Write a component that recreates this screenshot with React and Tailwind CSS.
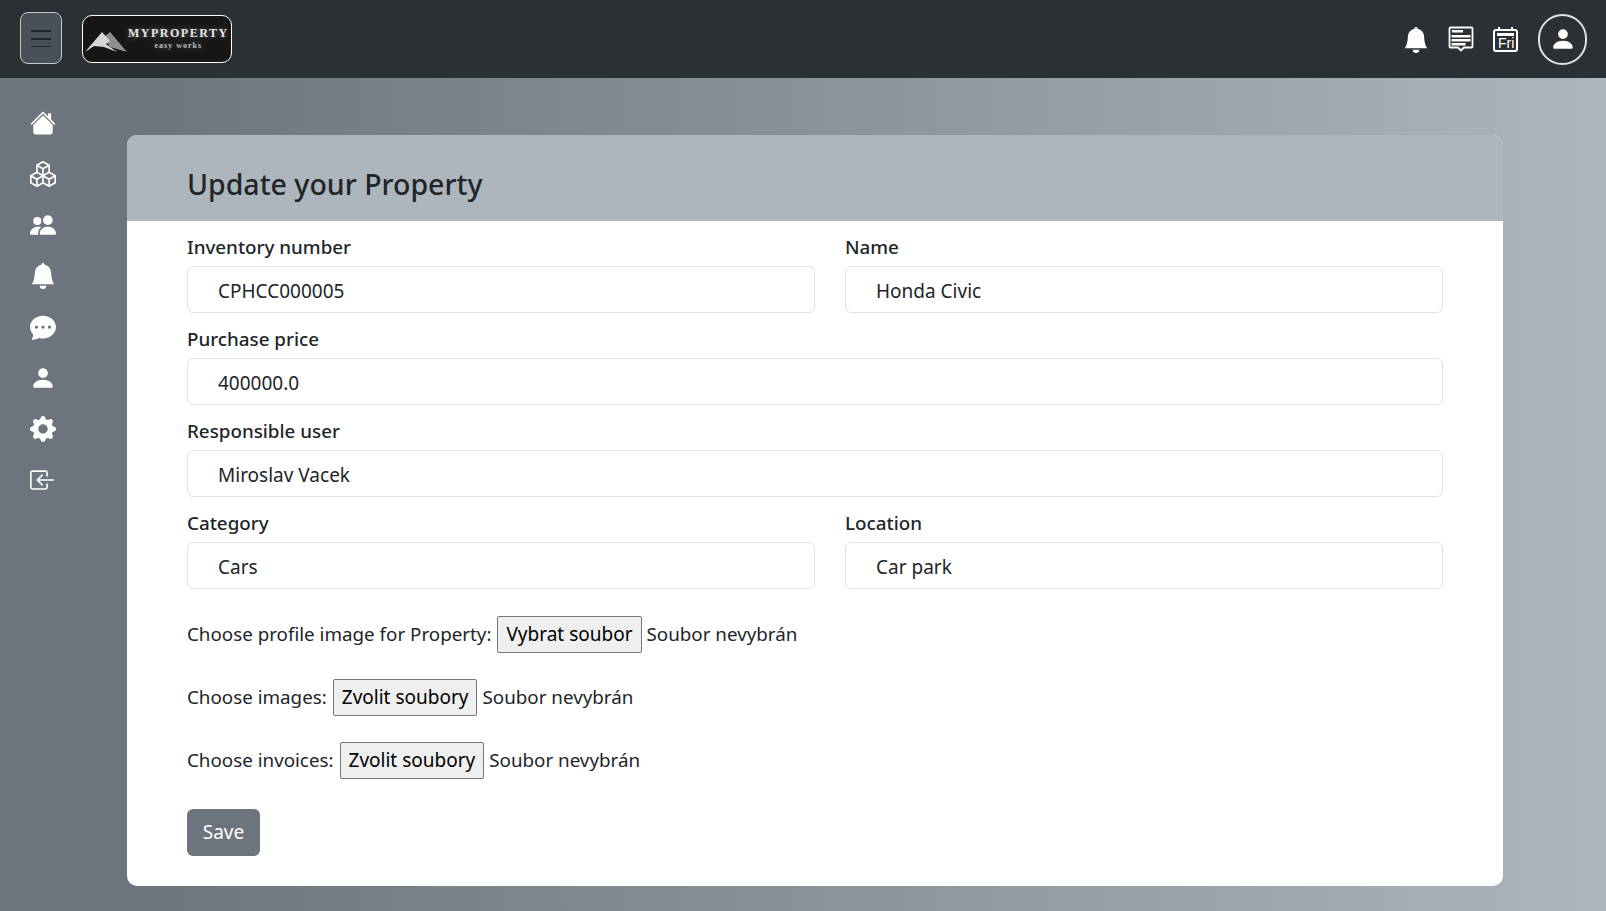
import React from "react";
import { BsHouseFill, BsBoxes, BsPeopleFill, BsBellFill, BsChatDotsFill, BsPersonFill, BsGearFill, BsBoxArrowInLeft } from "react-icons/bs";

const F = "font-['Noto_Sans',sans-serif]";

function Field({ label, value, className = "" }) {
  return (
    <div className={`flex flex-col ${className}`}>
      <label className="h-[45px] pt-[13px] text-[18.8px] leading-[27px] font-medium text-[#212529]">{label}</label>
      <div className="h-[47px] border border-[#dee2e6] rounded-[6px] bg-white pl-[30px] flex items-center text-[19px] text-[#212529]">
        <span className="translate-y-[2px]">{value}</span>
      </div>
    </div>
  );
}

function FileRow({ label, btn, className = "" }) {
  return (
    <div className={`flex items-center text-[18.8px] text-[#212529] ${className}`}>
      <span>{label}</span>
      <button type="button" className="ml-[6px] h-[37px] px-[8px] border border-[#767676] rounded-[2px] bg-[#efefef] text-[19px] text-black">{btn}</button>
      <span className="ml-[5px]">Soubor nevybrán</span>
    </div>
  );
}

function Logo() {
  return (
    <div className="ml-[20px] w-[150px] h-[48px] rounded-[10px] border border-white bg-[#161616] flex items-center overflow-hidden">
      <svg width="43" height="21" viewBox="0 0 43 21" className="ml-[2px] mt-[6px] shrink-0">
        <polygon points="19,5 25,0 42,20 25,15" fill="#8f8f8f" />
        <polygon points="0,20 17,0 25,9 21,12 32,20 19,15 9,14" fill="#d6d6d6" />
      </svg>
      <div className="-mt-[2px] flex flex-col items-center font-['Liberation_Serif',serif] text-[#e8e8e8] leading-none [text-shadow:0_0_6px_rgba(255,255,255,0.35)]">
        <span className="text-[12px] font-bold tracking-[1.5px]">MYPROPERTY</span>
        <span className="text-[8px] font-bold tracking-[1px] text-[#bdbdbd] mt-[3px]">easy works</span>
      </div>
    </div>
  );
}

function MessageIcon() {
  return (
    <svg width="26" height="26" viewBox="0 0 26 26" fill="none">
      <path d="M2.500 1.500h21a1 1 0 0 1 1 1v18a1 1 0 0 1-1 1h-7.500l-3 3-3-3h-7.500a1 1 0 0 1-1-1v-18a1 1 0 0 1 1-1z" stroke="#fff" strokeWidth="1.800" fill="#2b3035" />
      <rect x="4" y="4" width="11" height="2.500" fill="#fff" />
      <rect x="3.500" y="9" width="19" height="2.500" fill="#fff" />
      <rect x="3.500" y="13" width="19" height="2.500" fill="#fff" />
      <rect x="3.500" y="17" width="14" height="2.500" fill="#fff" />
    </svg>
  );
}

function CalendarIcon() {
  return (
    <div className="relative w-[25px] h-[23px] mt-[2px] border-2 border-white rounded-[3px]">
      <div className="absolute left-[2px] right-[2px] top-[2px] h-[3px] bg-white" />
      <div className="absolute left-[3px] top-[-4px] w-[2px] h-[3px] bg-white" />
      <div className="absolute right-[3px] top-[-4px] w-[2px] h-[3px] bg-white" />
      <span className="absolute left-[3px] top-[5px] text-[14px] leading-[14px] text-white font-['Liberation_Sans',sans-serif]">Fri</span>
    </div>
  );
}

export default function App() {
  const sideIcons = [BsHouseFill, BsBoxes, BsPeopleFill, BsBellFill, BsChatDotsFill, BsPersonFill, BsGearFill, BsBoxArrowInLeft];
  return (
    <div className={`${F} w-[1606px] h-[911px] overflow-hidden flex flex-col`}>
      <header className="h-[78px] shrink-0 bg-[#2b3035] flex items-center">
        <button className="ml-[20px] mb-[3px] w-[42px] h-[52px] rounded-[8px] border border-[#c5c9cd] bg-[#495057] flex flex-col items-center justify-center gap-[6px] pt-[2px]">
          <span className="block w-[20px] h-[1.500px] bg-[#212529]" />
          <span className="block w-[20px] h-[2px] bg-[#212529]" />
          <span className="block w-[20px] h-[1.500px] bg-[#212529]" />
        </button>
        <Logo />
        <div className="ml-auto flex items-center">
          <BsBellFill className="text-white w-[26px] h-[26px] mt-[1px]" />
          <div className="ml-[19px]"><MessageIcon /></div>
          <div className="ml-[19px]"><CalendarIcon /></div>
          <div className="ml-[20px] mr-[19px] w-[49px] h-[51px] rounded-full border-2 border-[#dee2e6] flex items-center justify-center">
            <BsPersonFill className="text-white w-[26px] h-[26px]" />
          </div>
        </div>
      </header>
      <div className="flex-1 flex">
        <nav className="w-[127px] shrink-0 bg-[#6c757d] pl-[30px] pt-[32px] flex flex-col gap-[25px]">
          {sideIcons.map((I, i) => (
            <I key={i} className="text-white w-[26px] h-[26px]" />
          ))}
        </nav>
        <div className="flex-1 pt-[57px] bg-linear-to-r from-[#6c757d] to-[#adb5bd]">
          <main className="w-[1376px] h-[751px] bg-white rounded-[10px] overflow-hidden flex flex-col">
            <div className="h-[86px] shrink-0 bg-[#adb5bd] pl-[60px] pt-[29px]">
              <h1 className="text-[28.5px] leading-[40px] font-medium text-[#212529]">Update your Property</h1>
            </div>
            <form className="px-[60px] flex flex-col">
              <div className="flex gap-[30px]">
                <Field label="Inventory number" value="CPHCC000005" className="w-[628px]" />
                <Field label="Name" value="Honda Civic" className="w-[598px]" />
              </div>
              <Field label="Purchase price" value="400000.0" />
              <Field label="Responsible user" value="Miroslav Vacek" />
              <div className="flex gap-[30px]">
                <Field label="Category" value="Cars" className="w-[628px]" />
                <Field label="Location" value="Car park" className="w-[598px]" />
              </div>
              <FileRow label="Choose profile image for Property:" btn="Vybrat soubor" className="mt-[27px]" />
              <FileRow label="Choose images:" btn="Zvolit soubory" className="mt-[26px]" />
              <FileRow label="Choose invoices:" btn="Zvolit soubory" className="mt-[26px]" />
              <button type="button" className="mt-[30px] w-[73px] h-[47px] rounded-[6px] bg-[#6c757d] text-white text-[19px]">Save</button>
            </form>
          </main>
        </div>
      </div>
    </div>
  );
}
